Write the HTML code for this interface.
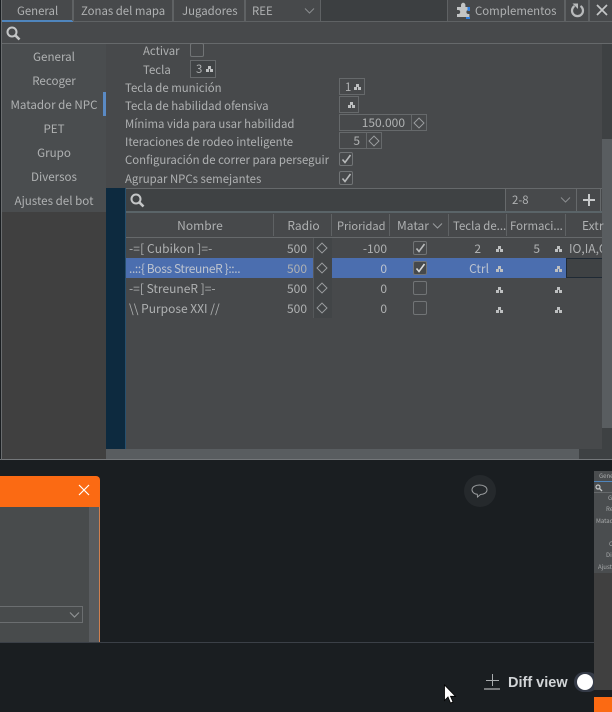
<!DOCTYPE html>
<html><head><meta charset="utf-8"><style>
html,body{margin:0;padding:0;background:#1a1e21;}
#r{position:relative;width:612px;height:712px;overflow:hidden;background:#1a1e21;font:11.4px/16px "Noto Sans CJK SC","Liberation Sans",sans-serif;color:#afb1b2;}
#r div,#r span,#r svg{position:absolute;}
.t{white-space:nowrap;line-height:16px;}
.c{text-align:center;}
.r{text-align:right;}
.w{font-size:12px;}
.m{font-size:11.6px;}
.b{box-sizing:border-box;border:1px solid #66696b;}
.n{width:3px;height:3px;background:#bdbfc0;box-shadow:-2px 3px 0 #bdbfc0,2px 3px 0 #bdbfc0;}
.d{width:8px;height:8px;box-sizing:border-box;border:1px solid #9a9d9f;transform:rotate(45deg);}
.ck{box-sizing:border-box;width:14px;height:14px;border:1px solid #717476;border-radius:2px;}
.s{width:1px;background:#5f6264;}
</style></head><body><div id="r">

<!-- main panel -->
<div style="left:1px;top:0;width:611px;height:460px;background:#47494b;"></div>
<div style="left:0;top:459px;width:612px;height:1px;background:#74777a;"></div>
<div style="left:1px;top:0;width:1px;height:460px;background:#6a6d6f;"></div>

<!-- tab bar -->
<div style="left:321px;top:0;width:126px;height:21px;background:#3c3f41;"></div>
<div style="left:2px;top:21px;width:610px;height:1px;background:#5f6264;"></div>
<div style="left:2px;top:20px;width:71px;height:2px;background:#4f85bd;"></div>
<div class="s" style="left:72px;top:0;height:21px;width:2px;"></div>
<div class="s" style="left:172px;top:0;height:21px;width:2px;"></div>
<div class="s" style="left:244px;top:0;height:21px;width:2px;"></div>
<div class="s" style="left:320px;top:0;height:21px;"></div>
<div class="s" style="left:447px;top:0;height:21px;"></div>
<div class="s" style="left:564px;top:0;height:21px;width:2px;"></div>
<div class="s" style="left:588px;top:0;height:21px;width:2px;"></div>
<span class="t" style="left:17px;top:3px;">General</span>
<span class="t" style="left:81px;top:3px;">Zonas del mapa</span>
<span class="t" style="left:182px;top:3px;">Jugadores</span>
<span class="t" style="left:252px;top:3px;">REE</span>
<svg style="left:304px;top:7px;" width="12" height="8"><path d="M1 1.5L5.5 6L10 1.5" fill="none" stroke="#8a8d8f" stroke-width="1"/></svg>
<svg style="left:456px;top:2px;" width="16" height="17"><path d="M1 5h4V3a2.2 2.2 0 0 1 4.4 0v2h4v3h-1a2 2 0 0 0 0 4h1v3H1v-3h1.2a2 2 0 0 0 0-4H1z" fill="#c2c4c5"/><rect x="11.5" y="5" width="2.5" height="4" fill="#2f7fe0"/><rect x="10" y="15" width="4" height="2.5" fill="#2f7fe0"/></svg>
<span class="t" style="left:475px;top:3px;">Complementos</span>
<svg style="left:570px;top:2px;" width="15" height="16"><path d="M4.5 4A5.5 5.5 0 1 0 10.5 4" fill="none" stroke="#b8babb" stroke-width="2.2"/><path d="M2.5 1.5H8V7z" fill="#b8babb"/></svg>
<svg style="left:596px;top:4px;" width="12" height="12"><path d="M1 1L11 11M11 1L1 11" stroke="#c4c6c7" stroke-width="1.7" fill="none"/></svg>

<!-- search row -->
<div style="left:2px;top:43px;width:610px;height:1px;background:#66696b;"></div>
<svg style="left:6px;top:26px;" width="15" height="15"><circle cx="6" cy="6" r="4.5" fill="none" stroke="#c4c6c7" stroke-width="2"/><path d="M9.3 9.3L13.5 13.5" stroke="#c4c6c7" stroke-width="2.6"/></svg>

<!-- sidebar -->
<div style="left:2px;top:44px;width:104px;height:168px;background:#4a4d4f;"></div>
<div style="left:2px;top:212px;width:104px;height:247px;background:#404040;"></div>
<div style="left:103px;top:92px;width:3px;height:24px;background:#5a8ac4;"></div>
<span class="t c m" style="left:2px;width:104px;top:49px;">General</span>
<span class="t c m" style="left:2px;width:104px;top:73px;">Recoger</span>
<span class="t c m" style="left:2px;width:104px;top:97px;">Matador de NPC</span>
<span class="t c m" style="left:2px;width:104px;top:121px;">PET</span>
<span class="t c m" style="left:2px;width:104px;top:145px;">Grupo</span>
<span class="t c m" style="left:2px;width:104px;top:169px;">Diversos</span>
<span class="t c m" style="left:2px;width:104px;top:193px;">Ajustes del bot</span>

<!-- scrollbars -->
<div style="left:602px;top:44px;width:10px;height:95px;background:#3e4143;"></div>
<div style="left:602px;top:139px;width:10px;height:289px;background:#595d60;"></div>
<div style="left:602px;top:428px;width:10px;height:31px;background:#3e4143;"></div>
<div style="left:106px;top:449px;width:473px;height:10px;background:#595d60;"></div>
<div style="left:579px;top:449px;width:33px;height:10px;background:#3e4143;"></div>

<!-- form -->
<span class="t" style="left:143px;top:43px;">Activar</span>
<div class="ck" style="left:190px;top:43px;"></div>
<span class="t" style="left:143px;top:62px;">Tecla</span>
<div class="b" style="left:190px;top:60px;width:26px;height:18px;background:#404345;"></div>
<span class="t" style="left:196px;top:61px;">3</span><div class="n" style="left:208px;top:66px;"></div>
<span class="t" style="left:125px;top:80px;">Tecla de munición</span>
<span class="t" style="left:125px;top:98px;">Tecla de habilidad ofensiva</span>
<span class="t" style="left:125px;top:116px;">Mínima vida para usar habilidad</span>
<span class="t" style="left:125px;top:134px;">Iteraciones de rodeo inteligente</span>
<span class="t" style="left:125px;top:152px;">Configuración de correr para perseguir</span>
<span class="t" style="left:125px;top:171px;">Agrupar NPCs semejantes</span>

<div class="b" style="left:339px;top:78px;width:26px;height:17px;"></div>
<span class="t" style="left:345px;top:79px;">1</span><div class="n" style="left:356px;top:84px;"></div>
<div class="b" style="left:339px;top:96px;width:20px;height:17px;"></div>
<div class="n" style="left:350px;top:102px;"></div>
<div class="b" style="left:339px;top:114px;width:73px;height:17px;"></div>
<div class="b" style="left:411px;top:114px;width:16px;height:17px;"></div>
<span class="t r w" style="left:340px;width:65px;top:115px;">150.000</span>
<div class="d" style="left:415px;top:119px;"></div>
<div class="b" style="left:339px;top:132px;width:28px;height:17px;"></div>
<div class="b" style="left:366px;top:132px;width:16px;height:17px;"></div>
<span class="t r w" style="left:340px;width:20px;top:133px;">5</span>
<div class="d" style="left:370px;top:137px;"></div>
<div class="ck" style="left:339px;top:152px;"></div>
<svg style="left:341px;top:154px;" width="11" height="11"><path d="M1.5 5.5L4 8.5L9.5 1" fill="none" stroke="#b8babb" stroke-width="1.6"/></svg>
<div class="ck" style="left:339px;top:171px;"></div>
<svg style="left:341px;top:173px;" width="11" height="11"><path d="M1.5 5.5L4 8.5L9.5 1" fill="none" stroke="#b8babb" stroke-width="1.6"/></svg>

<!-- table area -->
<div style="left:106px;top:188px;width:19px;height:261px;background:#0d2a3f;"></div>
<div style="left:125px;top:188px;width:1px;height:261px;background:#27506e;"></div>
<div style="left:126px;top:188px;width:476px;height:1px;background:#66696b;"></div>
<div style="left:126px;top:189px;width:379px;height:22px;background:#3f4244;"></div>
<div style="left:505px;top:189px;width:1px;height:22px;background:#66696b;"></div>
<div style="left:576px;top:189px;width:1px;height:22px;background:#66696b;"></div>
<div style="left:600px;top:189px;width:1px;height:22px;background:#66696b;"></div>
<svg style="left:130px;top:193px;" width="15" height="15"><circle cx="6" cy="6" r="4.5" fill="none" stroke="#c4c6c7" stroke-width="2"/><path d="M9.3 9.3L13.5 13.5" stroke="#c4c6c7" stroke-width="2.6"/></svg>
<span class="t" style="left:512px;top:192px;">2-8</span>
<svg style="left:560px;top:196px;" width="12" height="8"><path d="M1 1.5L5.5 6L10 1.5" fill="none" stroke="#8a8d8f"/></svg>
<svg style="left:582px;top:193px;" width="14" height="14"><path d="M7 1v12M1 7h12" stroke="#c8cacb" stroke-width="2"/></svg>
<div style="left:126px;top:211px;width:476px;height:2px;background:#5a6468;"></div>

<!-- header -->
<div style="left:126px;top:237px;width:476px;height:1px;background:#66696b;"></div>
<div class="s" style="left:273px;top:214px;height:22px;"></div>
<div class="s" style="left:331px;top:214px;height:22px;"></div>
<div class="s" style="left:389px;top:214px;height:22px;"></div>
<div class="s" style="left:448px;top:214px;height:22px;"></div>
<div class="s" style="left:506px;top:214px;height:22px;"></div>
<div class="s" style="left:565px;top:214px;height:22px;"></div>
<span class="t c w" style="left:126px;width:148px;top:218px;">Nombre</span>
<span class="t c w" style="left:275px;width:57px;top:218px;">Radio</span>
<span class="t" style="left:337px;top:218px;font-size:11.1px;">Prioridad</span>
<span class="t w" style="left:397px;top:218px;">Matar</span>
<svg style="left:432px;top:222px;" width="12" height="8"><path d="M1 1.5L5.5 6L10 1.5" fill="none" stroke="#9a9d9f"/></svg>
<span class="t" style="left:453px;top:218px;">Tecla de...</span>
<span class="t" style="left:510px;top:218px;">Formaci...</span>
<span class="t w" style="left:582px;top:218px;">Extr</span>

<!-- rows -->
<div style="left:313px;top:238px;width:19px;height:80px;background:#424547;"></div>
<div style="left:126px;top:258px;width:187px;height:20px;background:#4b6eaf;"></div>
<div style="left:332px;top:258px;width:234px;height:20px;background:#4b6eaf;"></div>
<div style="left:566px;top:258px;width:36px;height:20px;box-sizing:border-box;border:1px solid #1f2a35;border-right:0;background:#3f4244;"></div>
<div class="s" style="left:313px;top:238px;height:80px;background:#55585a;"></div>

<span class="t w" style="left:129px;top:241px;letter-spacing:.12px;">-=[ Cubikon ]=-</span>
<span class="t w" style="left:129px;top:261px;color:#bcc3cf;letter-spacing:-.38px;">..::{ Boss StreuneR }::..</span>
<span class="t w" style="left:129px;top:281px;">-=[ StreuneR ]=-</span>
<span class="t w" style="left:129px;top:301px;">\\ Purpose XXI //</span>

<span class="t r w" style="left:270px;width:37px;top:241px;">500</span>
<span class="t r w" style="left:270px;width:37px;top:261px;">500</span>
<span class="t r w" style="left:270px;width:37px;top:281px;">500</span>
<span class="t r w" style="left:270px;width:37px;top:301px;">500</span>
<div class="d" style="left:318px;top:244px;"></div>
<div class="d" style="left:318px;top:264px;"></div>
<div class="d" style="left:318px;top:284px;"></div>
<div class="d" style="left:318px;top:304px;"></div>

<span class="t r w" style="left:340px;width:47px;top:241px;">-100</span>
<span class="t r w" style="left:340px;width:47px;top:261px;color:#bcc3cf;">0</span>
<span class="t r w" style="left:340px;width:47px;top:281px;">0</span>
<span class="t r w" style="left:340px;width:47px;top:301px;">0</span>

<div class="ck" style="left:413px;top:241px;"></div>
<svg style="left:415px;top:243px;" width="11" height="11"><path d="M1.5 5.5L4 8.5L9.5 1" fill="none" stroke="#b8babb" stroke-width="1.6"/></svg>
<div class="ck" style="left:413px;top:261px;background:#46494b;"></div>
<svg style="left:415px;top:263px;" width="11" height="11"><path d="M1.5 5.5L4 8.5L9.5 1" fill="none" stroke="#d8dadb" stroke-width="1.6"/></svg>
<div class="ck" style="left:413px;top:281px;"></div>
<div class="ck" style="left:413px;top:301px;"></div>

<span class="t r w" style="left:450px;width:31px;top:241px;">2</span>
<span class="t r w" style="left:450px;width:39px;top:261px;color:#bcc3cf;">Ctrl</span>
<span class="t r w" style="left:510px;width:30px;top:241px;">5</span>
<div class="n" style="left:498px;top:246px;"></div>
<div class="n" style="left:498px;top:266px;"></div>
<div class="n" style="left:498px;top:287px;"></div>
<div class="n" style="left:498px;top:307px;"></div>
<div class="n" style="left:557px;top:246px;"></div>
<div class="n" style="left:557px;top:266px;"></div>
<div class="n" style="left:557px;top:287px;"></div>
<div class="n" style="left:557px;top:307px;"></div>
<div style="left:569px;top:241px;width:33px;height:16px;overflow:hidden;"><span class="t w" style="left:0;top:0;">IO,IA,Q</span></div>

<!-- orange dialog -->
<div style="left:0;top:476px;width:100px;height:31px;background:#fb6a13;border-top-right-radius:4px;"></div>
<svg style="left:78px;top:484px;" width="12" height="12"><path d="M1 1L11 11M11 1L1 11" stroke="#fff" stroke-width="1.2" fill="none"/></svg>
<div style="left:0;top:507px;width:99px;height:135px;background:#484b4c;"></div>
<div style="left:89px;top:507px;width:10px;height:135px;background:#595c5f;"></div>
<div style="left:99px;top:507px;width:1px;height:135px;background:#d0804f;"></div>
<div class="b" style="left:-5px;top:606px;width:88px;height:17px;border-color:#6b6e70;"></div>
<svg style="left:69px;top:611px;" width="12" height="8"><path d="M1 1.5L5.5 6L10 1.5" fill="none" stroke="#8f9294" stroke-width="1.2"/></svg>
<div style="left:0;top:642px;width:594px;height:1px;background:#3b4047;"></div>

<!-- comment bubble -->
<div style="left:464px;top:475px;width:32px;height:32px;border-radius:50%;background:#25292c;"></div>
<svg style="left:471px;top:484px;" width="18" height="16"><path d="M8.5 1C12.5 1 16 2.8 16 5.8C16 8.6 13 10.5 9.5 10.5L6.5 13L6.3 10.3C3.3 10 1 8.2 1 5.8C1 2.8 4.5 1 8.5 1Z" fill="none" stroke="#9a9d9f" stroke-width="1"/></svg>

<!-- diff view -->
<svg style="left:484px;top:673px;" width="17" height="18"><path d="M8.5 1V13M2 7.5H15" stroke="#a9acae" stroke-width="1"/><path d="M0 16H16" stroke="#d5d7d8" stroke-width="1"/></svg>
<span class="t" style="left:508px;top:675px;font:bold 14.5px/16px 'Liberation Sans',sans-serif;color:#d2d5d7;">Diff view</span>
<div style="left:574px;top:672px;width:24px;height:20px;border-radius:10px;background:#353b47;"></div>
<div style="left:577px;top:674px;width:16px;height:16px;border-radius:50%;background:#fff;"></div>

<!-- thumbnail -->
<div style="left:594px;top:471px;width:18px;height:219px;background:#404040;"></div>
<div style="left:594px;top:471px;width:18px;height:102px;background:#4a4d4f;"></div>
<div style="left:594px;top:481px;width:18px;height:1px;background:#4f85bd;"></div>
<div style="left:594px;top:492px;width:18px;height:1px;background:#66696b;"></div>
<div style="left:0;top:0;width:612px;height:712px;overflow:hidden;font-size:6px;color:#a9abac;">
<span class="t" style="left:599px;top:468px;">Gene</span>
<span class="t" style="left:608px;top:490px;">G</span>
<span class="t" style="left:606px;top:501px;">Re</span>
<span class="t" style="left:596px;top:513px;">Matad</span>
<span class="t" style="left:609px;top:536px;">C</span>
<span class="t" style="left:606px;top:547px;">Di</span>
<span class="t" style="left:598px;top:559px;">Ajust</span>
</div>
<svg style="left:595px;top:484px;" width="8" height="8"><circle cx="3" cy="3" r="2" fill="none" stroke="#c4c6c7" stroke-width="1.2"/><path d="M4.5 4.5L7 7" stroke="#c4c6c7" stroke-width="1.3"/></svg>
<div style="left:594px;top:697px;width:18px;height:15px;background:#fb6a13;"></div>

<!-- cursor -->
<svg style="left:443px;top:684px;" width="14" height="21"><path d="M1.5 1V16.5L5 13L7.5 19L10 18L7.5 12.3H12.5Z" fill="#fff" stroke="#000" stroke-width="0.8"/></svg>

</div></body></html>
